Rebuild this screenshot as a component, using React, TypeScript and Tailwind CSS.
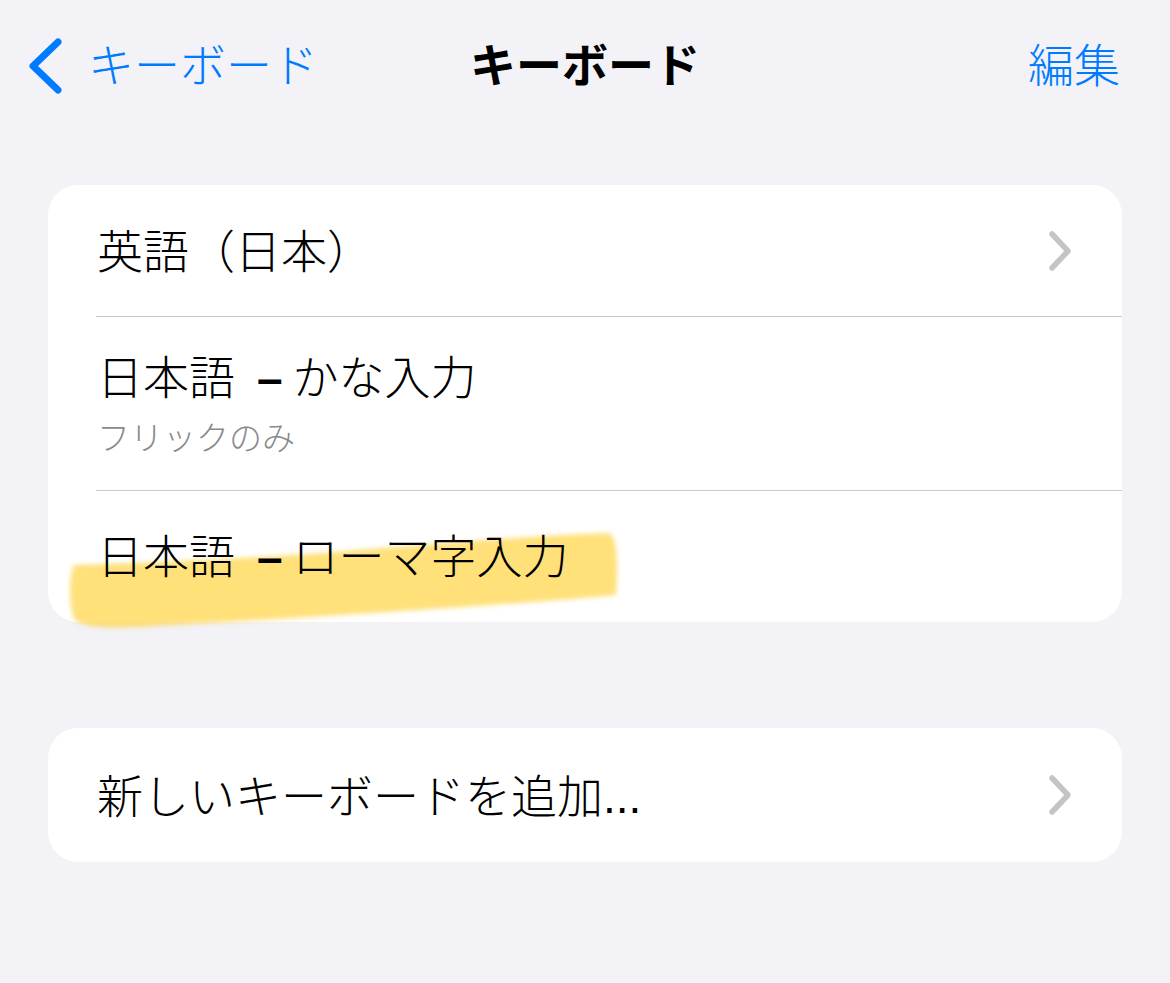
import React from "react";

const font = {
  fontFamily: '"Noto Sans CJK JP", "Noto Sans", sans-serif',
};

function Chevron() {
  return (
    <svg width="30" height="44" viewBox="0 0 30 44" className="shrink-0">
      <path
        d="M6 5 L22 22 L6 39"
        fill="none"
        stroke="#c4c4c7"
        strokeWidth="5.5"
        strokeLinecap="round"
        strokeLinejoin="round"
      />
    </svg>
  );
}

function Dash() {
  return (
    <span className="ml-[22px] mr-[10px] font-['Liberation_Sans'] font-bold">
      –
    </span>
  );
}

export default function App() {
  return (
    <div
      className="w-[1170px] h-[983px] bg-[#f2f2f7] overflow-hidden font-light"
      style={font}
    >
      {/* Nav bar */}
      <div className="h-[130px] pb-[6px] grid grid-cols-[1fr_auto_1fr] items-center">
        <div className="flex items-center pl-[26px]">
          <svg width="40" height="60" viewBox="0 0 40 60" className="shrink-0 mt-[6px]">
            <path
              d="M32 7 L7 31 L32 55"
              fill="none"
              stroke="#007aff"
              strokeWidth="7"
              strokeLinecap="round"
              strokeLinejoin="round"
            />
          </svg>
          <span className="ml-[22px] text-[46px] leading-[56px] text-[#007aff]">
            キーボード
          </span>
        </div>
        <div className="text-[46px] leading-[56px] font-bold text-black">
          キーボード
        </div>
        <div className="flex justify-end pr-[50px]">
          <span className="text-[46px] leading-[56px] text-[#007aff]">編集</span>
        </div>
      </div>

      {/* Card 1 */}
      <div className="mt-[55px] mx-[48px] relative rounded-[30px] bg-white">
        <svg
          className="absolute left-0 top-0 pointer-events-none"
          width="620"
          height="460"
          viewBox="0 0 620 460"
        >
          <defs>
            <filter id="blur" x="-10%" y="-30%" width="120%" height="160%">
              <feGaussianBlur stdDeviation="2.5" />
            </filter>
          </defs>
          <path
            d="M26 380 C 90 378, 200 374, 300 366 C 400 358, 480 351, 560 348 C 569 350, 570 372, 568 410 C 520 415, 430 421, 340 427 C 250 433, 160 438, 90 442 C 50 444, 30 441, 25 432 C 21 412, 21 392, 26 380 Z"
            fill="#ffd54a"
            fillOpacity="0.74"
            filter="url(#blur)"
          />
        </svg>

        <div className="relative">
          {/* Row 1 */}
          <div className="h-[131px] pb-[6px] flex items-center justify-between pl-[49px] pr-[46px]">
            <span className="text-[46px] leading-[56px] text-black">
              英語（日本）
            </span>
            <span className="mt-[6px] flex">
              <Chevron />
            </span>
          </div>
          <div className="ml-[48px] h-px bg-[#c8c8cc]" />

          {/* Row 2 */}
          <div className="h-[173px] flex flex-col pl-[49px] pt-[29px]">
            <span className="text-[46px] leading-[56px] text-black">
              日本語
              <Dash />
              かな入力
            </span>
            <span className="mt-[10px] text-[33px] leading-[40px] text-[#8a8a8e]">
              フリックのみ
            </span>
          </div>
          <div className="ml-[48px] h-px bg-[#c8c8cc]" />

          {/* Row 3 */}
          <div className="h-[131px] pb-[4px] flex items-center pl-[49px]">
            <span className="text-[46px] leading-[56px] text-black">
              日本語
              <Dash />
              ローマ字入力
            </span>
          </div>
        </div>
      </div>

      {/* Card 2 */}
      <div className="mt-[106px] mx-[48px] rounded-[30px] bg-white h-[134px] flex items-center justify-between pl-[49px] pr-[46px]">
        <span className="text-[46px] leading-[56px] text-black">
          新しいキーボードを追加
          <span className="font-['Liberation_Sans'] font-normal">...</span>
        </span>
        <Chevron />
      </div>
    </div>
  );
}
